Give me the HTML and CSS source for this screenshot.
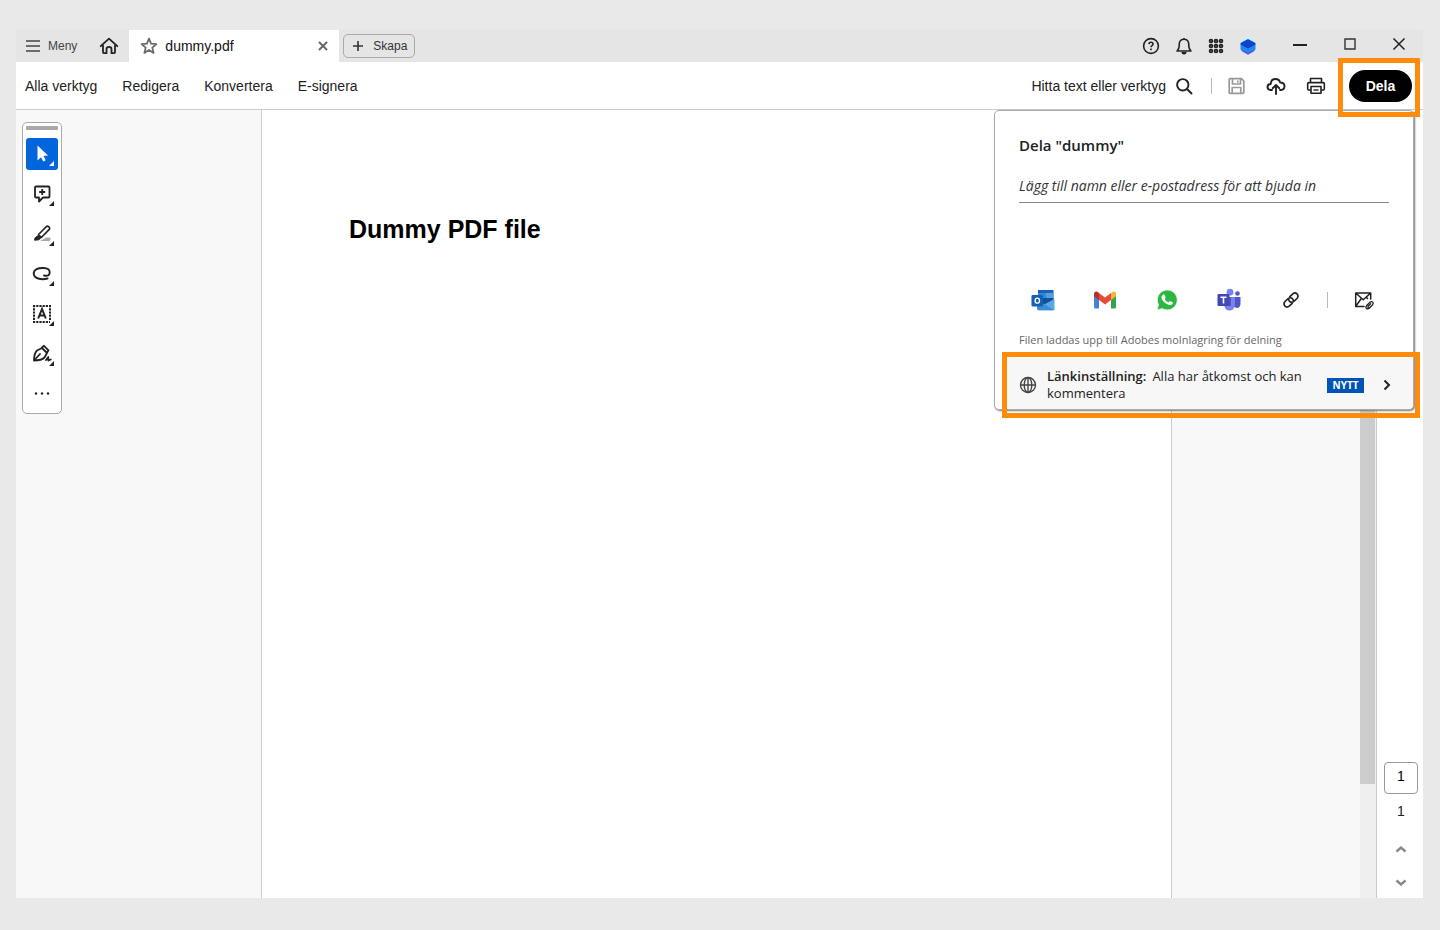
FILE: index.html
```html
<!DOCTYPE html>
<html lang="sv">
<head>
<meta charset="utf-8">
<title>dummy.pdf</title>
<link rel="stylesheet" href="styles.css">
</head>
<body>
<div class="window">
  <header class="titlebar">
    <button class="menu-btn"><svg width="16" height="14" viewBox="0 0 16 14" stroke="#444" stroke-width="1.6"><path d="M1 2h14M1 7h14M1 12h14"/></svg>Meny</button>
    <button class="home-btn" aria-label="Hem"><svg width="20" height="18" viewBox="0 0 20 18" fill="none" stroke="#222" stroke-width="1.8" stroke-linejoin="round" stroke-linecap="round"><path d="M1.700 9.200 10 1.700l8.300 7.500M4 8v7.300q0 .9.900.9h2.600v-4q0-2.400 2.500-2.400t2.500 2.400v4h2.600q.9 0 .9-.9V8"/></svg></button>
    <div class="tab">
      <svg width="18" height="18" viewBox="0 0 18 18" fill="none" stroke="#6a6a6a" stroke-width="1.800" stroke-linejoin="round"><path d="m9 1.700 2.100 5 5.300.4-4.100 3.500 1.300 5.300L9 13l-4.600 2.900 1.300-5.300-4.100-3.500 5.300-.4z"/></svg>
      <span class="tab-name">dummy.pdf</span>
      <button aria-label="Stäng flik"><svg width="10" height="10" viewBox="0 0 10 10" stroke="#666" stroke-width="1.900"><path d="m1 1 8 8M9 1 1 9"/></svg></button>
    </div>
    <button class="create-btn"><svg width="12" height="12" viewBox="0 0 12 12" stroke="#333" stroke-width="1.600"><path d="M6 1v10M1 6h10"/></svg>Skapa</button>
    <div class="title-icons">
      <button aria-label="Hjälp"><svg width="18" height="18" viewBox="0 0 18 18" fill="none" stroke="#222" stroke-width="1.600"><circle cx="9" cy="9" r="7.400"/><path d="M6.900 7.200q.2-1.900 2.100-1.900 2 0 2 1.700 0 1-1 1.600-1 .6-1 1.600"/><path d="M9 11.500v1.700"/></svg></button>
      <button aria-label="Meddelanden"><svg width="18" height="18" viewBox="0 0 18 18" fill="none" stroke="#222" stroke-width="1.600" stroke-linejoin="round"><path d="M9 1v1.500M2 14h14q-2.200-2-2.200-5V7.200Q13.500 2.300 9 2.300T4.200 7.200V9q0 3-2.200 5z"/><path d="M6.500 15q0 2.500 2.500 2.500t2.500-2.500z" fill="#222" stroke="none"/></svg></button>
      <button aria-label="Appar"><svg width="16" height="16" viewBox="0 0 16 16" fill="#222"><circle cx="3" cy="3" r="2.300"/><circle cx="8" cy="3" r="2.300"/><circle cx="13" cy="3" r="2.300"/><circle cx="3" cy="8" r="2.300"/><circle cx="8" cy="8" r="2.300"/><circle cx="13" cy="8" r="2.300"/><circle cx="3" cy="13" r="2.300"/><circle cx="8" cy="13" r="2.300"/><circle cx="13" cy="13" r="2.300"/><g fill="#aaa"><circle cx="3" cy="3" r=".6"/><circle cx="8" cy="3" r=".6"/><circle cx="13" cy="3" r=".6"/><circle cx="3" cy="8" r=".6"/><circle cx="8" cy="8" r=".6"/><circle cx="13" cy="8" r=".6"/><circle cx="3" cy="13" r=".6"/><circle cx="8" cy="13" r=".6"/><circle cx="13" cy="13" r=".6"/></g></svg></button>
      <button aria-label="Konto"><svg width="18" height="18" viewBox="0 0 18 18"><circle cx="9" cy="9" r="8.500" fill="#c9f3ea"/><path d="m2.500 12 6.500 3 6.500-3v2L9 17.800l-6.500-3.800z" fill="#6a45ea"/><path d="m1.500 8 7.500 4 7.500-4v4.500L9 16l-7.500-3.500z" fill="#1d86f5"/><path d="M9 2 16.500 6v2L9 12 1.500 8V6z" fill="#0b45d0"/></svg></button>
    </div>
    <div class="window-controls">
      <button aria-label="Minimera"><svg width="16" height="16" viewBox="0 0 16 16" stroke="#222" stroke-width="2"><path d="M1 9h14"/></svg></button>
      <button aria-label="Maximera"><svg width="14" height="14" viewBox="0 0 14 14" fill="none" stroke="#333" stroke-width="1.400"><path d="M2 2h10v10H2z"/></svg></button>
      <button aria-label="Stäng"><svg width="14" height="14" viewBox="0 0 14 14" stroke="#222" stroke-width="1.500"><path d="m1.500 1.500 11 11M12.500 1.500l-11 11"/></svg></button>
    </div>
  </header>

  <div class="toolbar">
    <nav class="tools-nav">
      <button>Alla verktyg</button><button>Redigera</button><button>Konvertera</button><button>E-signera</button>
    </nav>
    <button class="search">Hitta text eller verktyg<svg width="18" height="18" viewBox="0 0 18 18" fill="none" stroke="#222" stroke-width="1.900" stroke-linecap="round"><circle cx="7.800" cy="7.800" r="5.700"/><path d="m12 12 4.500 4.500"/></svg></button>
    <span class="divider"></span>
    <div class="file-actions">
      <button aria-label="Spara"><svg width="18" height="18" viewBox="0 0 18 18" fill="none" stroke="#999" stroke-width="1.700" stroke-linejoin="round"><path d="M2 1.700H13.500L15.800 4v11.500q0 .8-.8.8H2q-.8 0-.8-.8v-13q0-.8.800-.8zM4.500 2v5h8V2M4.200 16v-5.500h8.600V16M9.800 3.500v2"/></svg></button>
      <button aria-label="Ladda upp"><svg width="20" height="18" viewBox="0 0 20 18" fill="none" stroke="#222" stroke-width="1.900" stroke-linecap="round" stroke-linejoin="round"><path d="M6 13H4.500Q1.500 12.700 1.500 10q0-2.800 3.200-3Q5 2 9.500 2q3.600 0 4.700 3.500 4.300 0 4.300 3.800 0 3.400-3.500 3.700h-1"/><path d="M10 17V8.500M6.700 11.200 10 8l3.300 3.200"/></svg></button>
      <button aria-label="Skriv ut"><svg width="20" height="18" viewBox="0 0 20 18" fill="none" stroke="#222" stroke-width="1.600" stroke-linejoin="round"><path d="M4.500 5V1.500h11V5M4.500 13H2.600q-.9 0-.9-.9V6.500q0-.9.900-.9h14.800q.9 0 .9.900v5.600q0 .9-.9.900h-1.900M5 9.500h10v6.800H5z"/><path d="M7.500 13h5" stroke-width="1.400"/></svg></button>
    </div>
    <div class="share-wrap">
      <button class="share-btn">Dela</button>
      <span class="highlight highlight-share"></span>
    </div>
  </div>

  <main class="workspace">
    <aside class="left-gutter">
      <div class="quick-tools">
        <span class="grip"></span>
        <button class="tool selected" aria-label="Markera"><svg width="32" height="32" viewBox="0 0 32 32" fill="#fff"><path d="M11.500 7.500v15l3.500-3.300 2.300 4.300 2.400-1.200-2.200-4.300 4.500-.5z"/><path d="M28 23v5h-5z"/></svg></button>
        <button class="tool" aria-label="Kommentar"><svg width="32" height="32" viewBox="0 0 32 32" fill="none" stroke="#222" stroke-width="1.800" stroke-linejoin="round"><path d="M10 8.500h12.500q1 0 1 1v9q0 1-1 1H17L13 23.500v-4h-3q-1 0-1-1v-9q0-1 1-1z"/><path d="M16.200 11v6M13.200 14h6"/><path d="M28 23v5h-5z" fill="#222" stroke="none"/></svg></button>
        <button class="tool" aria-label="Markera text"><svg width="32" height="32" viewBox="0 0 32 32" fill="none" stroke="#222" stroke-width="1.700" stroke-linejoin="round"><path d="M14 23h9q2-1 1.500-3.500h-4z" fill="#aaa" stroke="none"/><path d="m12.500 16.500 8-8q1-.8 2 .1l.8.800q.9 1 0 2l-8 8.100z"/><path d="m12.300 17.500 2.500 2.500-2 1.800-4.300.4.600-2.500z" fill="#222" stroke-width="1"/><path d="M28 23v5h-5z" fill="#222" stroke="none"/></svg></button>
        <button class="tool" aria-label="Rita"><svg width="32" height="32" viewBox="0 0 32 32" fill="none" stroke="#222" stroke-width="1.900" stroke-linecap="round"><path d="M18 17.500q5.500 1 5.700-2.700Q24 10.200 17.500 10 8.500 9.800 7.700 15q-.3 4.500 5.300 5.800 4 .9 8.500-.3"/><path d="M28 23v5h-5z" fill="#222" stroke="none"/></svg></button>
        <button class="tool" aria-label="Lägg till text"><svg width="32" height="32" viewBox="0 0 32 32" fill="none" stroke="#222" stroke-width="2"><path d="M7 8h18M7 24h17M8 7v18M24 7v15" stroke-dasharray="2.200 1"/><path d="m12.200 20.500 3.800-9.500 3.800 9.500M13.500 17.500h5"/><path d="M28 23v5h-5z" fill="#222" stroke="none"/></svg></button>
        <button class="tool" aria-label="Signera"><svg width="32" height="32" viewBox="0 0 32 32" fill="none" stroke="#222" stroke-width="1.800" stroke-linejoin="round" stroke-linecap="round"><path d="M8 22.500q0-7 3-10l5-2.500 5 5-2.500 4.500q-3 3-10.500 3zM8.500 22l5.500-6M16 9.500l2-1.700 4.500 4.500-1.500 2.500M20 22l2.300-3v3.500l2.500-1"/><path d="M28 23v5h-5z" fill="#222" stroke="none"/></svg></button>
        <button class="tool" aria-label="Mer"><svg width="32" height="32" viewBox="0 0 32 32" fill="#222"><circle cx="10" cy="15.500" r="1.200"/><circle cx="16" cy="15.500" r="1.200"/><circle cx="22" cy="15.500" r="1.200"/></svg></button>
      </div>
    </aside>
    <article class="page"><h1>Dummy PDF file</h1></article>
    <div class="right-gutter"></div>
    <div class="scrollbar"><span class="thumb"></span></div>
    <aside class="page-nav">
      <input class="page-input" aria-label="Sidnummer" value="1">
      <span class="page-total">1</span>
      <button aria-label="Föregående sida"><svg width="12" height="8" viewBox="0 0 12 8" fill="none" stroke="#888" stroke-width="2.400"><path d="m1.500 6.500 4.500-4 4.500 4"/></svg></button>
      <button aria-label="Nästa sida"><svg width="12" height="8" viewBox="0 0 12 8" fill="none" stroke="#888" stroke-width="2.400"><path d="m1.500 1.500 4.500 4 4.500-4"/></svg></button>
    </aside>

    <section class="share-panel">
      <h2>Dela "dummy"</h2>
      <input class="invite" aria-label="Bjud in" placeholder="Lägg till namn eller e-postadress för att bjuda in">
      <div class="share-apps">
        <button aria-label="Outlook"><svg width="24" height="24" viewBox="0 0 24 24"><path d="M7 2h15.500v9H7z" fill="#1b62b8"/><path d="M7 5h8v6H7z" fill="#2b8ade"/><path d="M15 5h7.500v6H15z" fill="#4fa3df"/><path d="M7 10h15.500v8H7z" fill="#174f96"/><path d="M23.500 11v10q0 1.500-1.500 1.500H7L14 16z" fill="#5aaae4"/><path d="M6 12l17.500 10H7.500Q6 22 6 20.500z" fill="#3c8dd4"/><rect x=".5" y="7" width="11.500" height="11.500" rx="1.200" fill="#155fb5"/><ellipse cx="6.300" cy="12.700" rx="2.200" ry="2.500" fill="none" stroke="#fff" stroke-width="1.300"/></svg></button>
        <button aria-label="Gmail"><svg width="24" height="24" viewBox="0 0 24 24"><path d="M1 6v13q0 1.500 1.500 1.500H6V9z" fill="#4285d8"/><path d="M18 9v11.500h3.500q1.500 0 1.500-1.500V6z" fill="#35a350"/><path d="M18 5v7l5-3.800V6q-.2-3.500-3.500-2.200z" fill="#f3b92d"/><path d="M1 6v2.200L6 12V5L4.500 3.800Q1.200 2.800 1 6z" fill="#b83128"/><path d="M6 5v7l6 4.500 6-4.500V5l-6 4.600z" fill="#e64b3c"/></svg></button>
        <button aria-label="WhatsApp"><svg width="24" height="24" viewBox="0 0 24 24"><path d="m2 22 1.500-5.300A10 10 0 1 1 7.300 20.600z" fill="#2bb741" stroke="#e4f3e5"/><path d="M8.200 6.500q.8-.5 1.400.4l1 2.300q0 .6-1 1.700 1.300 2.500 3.900 3.500l1.300-1.500 2.900 1.400q.4.500-.2 1.700-1.200 1.500-3.500 1-6-1.800-7.600-7.200-.1-2.100 1.800-3.300z" fill="#fff"/></svg></button>
        <button aria-label="Teams"><svg width="24" height="24" viewBox="0 0 24 24"><circle cx="20.500" cy="5.500" r="2.300" fill="#5058c9"/><path d="M15 9h8.500v7q-.5 4-3.500 4-3 0-5-3z" fill="#5058c9"/><circle cx="13" cy="4.200" r="3.400" fill="#7b83eb"/><path d="M7 9h11v8q-1 5.500-5.500 5.500T7 17z" fill="#7b83eb"/><path d="M8 9h6v9H8z" fill="#5058b5"/><rect x=".5" y="6" width="12" height="12" rx="1" fill="#4147b5"/><path d="M3.500 9.200h6M6.500 9v6.500" stroke="#fff" stroke-width="1.600"/></svg></button>
        <button aria-label="Kopiera länk"><svg width="24" height="24" viewBox="0 0 24 24" fill="none" stroke="#222" stroke-width="1.600" stroke-linecap="round"><path d="m10.800 8.700 3-2.900q2.200-1.700 4.200 0 2 2.300.2 4.400l-3.300 3.200q-2.300 1.800-4.400-.1-.8-.9-.9-1.900"/><path d="m13.200 15.300-3 2.900q-2.200 1.700-4.200 0-2-2.300-.2-4.400l3.300-3.200q2.300-1.800 4.400.1.800.9.900 1.900"/></svg></button>
        <span class="divider"></span>
        <button aria-label="Skicka som bilaga"><svg width="24" height="24" viewBox="0 0 24 24" fill="none" stroke="#222" stroke-width="1.500" stroke-linecap="round" stroke-linejoin="round"><path d="M12 18.500H3.700V5h15v6M4 5.300l7.200 6.500 7.200-6.500M4 18l5.300-7.500M15.500 10.500l-1-1"/><path stroke-width="1.300" d="m14.700 17.500 3.300-3.400q1.800-1.100 2.800 0 .9 1.200-.2 2.600l-2.900 3q-.9.500-1.500 0t0-1.500l2.400-2.500M14.700 17.500q-1.500 1.700-.4 2.900 1.500 1 3-.2l1-1"/></svg></button>
      </div>
      <p class="note">Filen laddas upp till Adobes molnlagring för delning</p>
      <button class="link-setting">
        <svg width="18" height="18" viewBox="0 0 18 18" fill="none" stroke="#444" stroke-width="1.400"><circle cx="9" cy="9" r="7.500"/><ellipse cx="9" cy="9" rx="3.800" ry="7.500"/><path d="M9 1.500v15M1.500 9h15"/></svg>
        <span class="link-text"><strong>Länkinställning:</strong>Alla har åtkomst och kan kommentera</span>
        <span class="new-badge">NYTT</span>
        <svg width="8" height="12" viewBox="0 0 8 12" fill="none" stroke="#222" stroke-width="2"><path d="m1.500 1.500 4.500 4.500-4.500 4.500"/></svg>
        <span class="highlight highlight-link"></span>
      </button>
    </section>
  </main>
</div>
</body>
</html>
```

FILE: styles.css
```css
* { box-sizing: border-box; }

body {
  margin: 0;
  min-height: 100vh;
  padding: 30px 17px 32px 16px;
  display: flex;
  background: #e9e9e9;
  font: 14px/20px "Liberation Sans", Arial, sans-serif;
  color: #222;
}

button {
  border: 0;
  padding: 0;
  background: none;
  color: inherit;
  font: inherit;
}

button, .tab { display: flex; align-items: center; }
svg { display: block; flex: none; }

.window { flex: 1; display: flex; flex-direction: column; min-width: 0; }

.titlebar { display: flex; align-items: center; height: 32px; background: #e5e5e5; }
.menu-btn { margin-left: 9px; gap: 7px; font-size: 12px; color: #444; }
.home-btn { margin: 0 10px 0 22px; }
.tab { align-self: stretch; width: 210px; padding: 0 11px; gap: 7px; background: #fff; color: #111; }
.tab-name { flex: 1; }
.create-btn {
  height: 24px;
  margin-left: 4px;
  padding: 0 7px 0 8px;
  gap: 9px;
  border: 1px solid #aaa;
  border-radius: 5px;
  font-size: 12px;
  color: #333;
}
.title-icons { display: flex; align-items: center; gap: 15px; margin-left: auto; }
.window-controls { display: flex; align-items: center; gap: 35px; margin: 0 17px 4px 35px; }

.toolbar {
  display: flex;
  align-items: center;
  height: 48px;
  padding: 0 11px 0 9px;
  border-bottom: 1px solid #ccc;
  background: #fff;
}
.tools-nav { display: flex; gap: 25px; }
.search { margin-left: auto; gap: 9px; }
.divider { width: 1px; height: 16px; background: #bbb; }
.search + .divider { margin-left: 18px; }
.file-actions { display: flex; gap: 20px; margin: 0 23px 0 16px; }
.share-wrap { position: relative; z-index: 3; }
.share-btn {
  justify-content: center;
  width: 63px;
  height: 32px;
  border-radius: 16px;
  background: #000;
  color: #fff;
  font-weight: bold;
}

.highlight { position: absolute; border: 5px solid #ff8b0a; pointer-events: none; }
.highlight-share { inset: -12px -8px -15px -11px; }
.highlight-link { inset: -6px -7px -9px -1px; }

.workspace { position: relative; flex: 1; display: flex; background: #f8f8f8; }
.left-gutter { width: 245px; padding: 12px 6px; }
.quick-tools {
  display: flex;
  flex-direction: column;
  align-items: center;
  gap: 8px;
  width: 40px;
  padding: 3px;
  border: 1px solid #aaa;
  border-radius: 5px;
  background: #fff;
}
.grip { width: 32px; height: 4px; border-radius: 1px; background: #aaa; }
.tool { border-radius: 3px; }
.selected { background: #0265dc; }

.page { flex: 1; padding: 104px 87px; border: solid #ccc; border-width: 0 1px; background: #fff; }
.page h1 { margin: 0; font-size: 25px; line-height: 30px; color: #000; }
.right-gutter { width: 188px; }
.scrollbar { display: flex; width: 16px; padding-bottom: 114px; background: #efefef; }
.thumb { width: 15px; background: #ccc; }
.page-nav {
  display: flex;
  flex-direction: column;
  justify-content: flex-end;
  align-items: center;
  width: 47px;
  padding: 0 0 11px 2px;
  border-left: 1px solid #ccc;
  background: #fff;
}
.page-input {
  width: 34px;
  height: 32px;
  padding: 0 0 4px;
  border: 1px solid #999;
  border-radius: 4px;
  text-align: center;
  font: inherit;
}
.page-total { margin: 7px 0 24px; }
.page-nav button + button { margin-top: 26px; }

.share-panel {
  position: absolute;
  top: 0;
  right: 9px;
  z-index: 2;
  width: 420px;
  padding: 23px 0 0 8px;
  border: 1px solid #aaa;
  border-radius: 5px;
  background: #fff;
  box-shadow: 1px 1px 2px #777;
  font-family: "Open Sans", "Noto Sans", sans-serif;
}
.share-panel h2 { margin: 0 16px; font-size: 15px; line-height: 22px; font-weight: 600; }
.invite {
  display: block;
  width: 370px;
  height: 36px;
  margin: 11px 16px 0;
  padding: 2px 0 0;
  border: 0;
  border-bottom: 1px solid #888;
  font: italic 14px/20px "Open Sans", "Noto Sans", sans-serif;
}
.invite::placeholder { color: #333; opacity: 1; }
.share-apps {
  display: flex;
  align-items: center;
  gap: 38px;
  margin: 85px 16px 0 28px;
}
.share-apps .divider { margin: 0 -14px; }
.note { margin: 18px 16px 0; font-size: 11px; line-height: 20px; color: #666; }
.link-setting {
  position: relative;
  width: 100%;
  margin-top: 8px;
  padding: 10px 22px 7px 16px;
  border-radius: 0 0 4px 0;
  background: #f7f7f7;
  font-size: 13px;
  line-height: 17px;
  text-align: left;
}
.link-text { flex: 1; padding: 0 12px 0 10px; }
.link-text strong { margin-right: 6px; font-weight: 600; }
.new-badge {
  width: 37px;
  margin-right: 19px;
  background: #0054b6;
  color: #fff;
  font-size: 10px;
  line-height: 15px;
  font-weight: bold;
  text-align: center;
}
```
